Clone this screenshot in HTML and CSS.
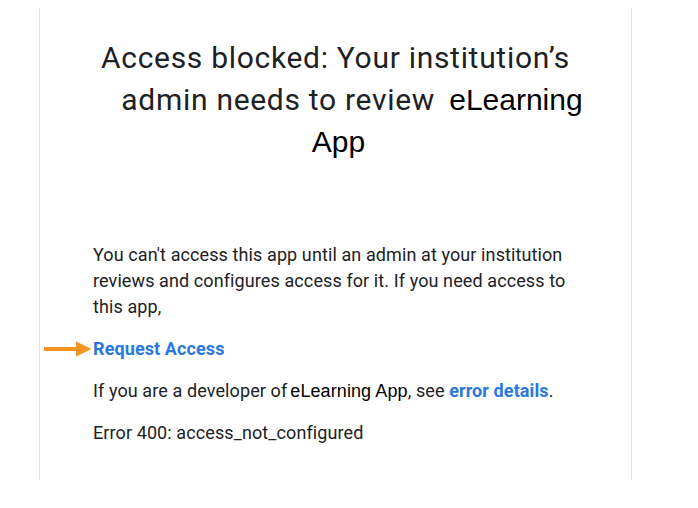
FILE: index.html
```html
<!DOCTYPE html>
<html lang="en">
<head>
<meta charset="utf-8">
<title>Access blocked</title>
<link rel="stylesheet" href="styles.css">
</head>
<body>
  <main class="card">
    <h1 class="title">
      <span class="title-line">Access blocked: Your institution’s</span>
      <span class="title-line title-line-shift">admin needs to review <span class="app-name app-gap">eLearning</span></span>
      <span class="title-line title-line-app"><span class="app-name">App</span></span>
    </h1>
    <p class="text">You can't access this app until an admin at your institution reviews and configures access for it. If you need access to this app,</p>
    <p class="text request">
      <svg class="arrow" width="48" height="16" viewBox="0 0 48 16" aria-hidden="true">
        <rect x="0" y="6" width="34" height="4" fill="#f7941d"/>
        <polygon points="32,0.5 47.5,8 32,15.5" fill="#f7941d"/>
      </svg>
      <a class="link strong" href="#">Request Access</a>
    </p>
    <p class="text">If you are a developer of<span class="app-inline">eLearning App</span>, see <a class="link strong" href="#">error details</a>.</p>
    <p class="text">Error 400: access_not_configured</p>
  </main>
</body>
</html>
```

FILE: styles.css
```css
html, body {
  margin: 0;
  padding: 0;
  background: #ffffff;
}

body {
  font-family: Roboto, "Liberation Sans", Arial, sans-serif;
  color: #202124;
}

.card {
  box-sizing: border-box;
  margin: 8px 0 0 39px;
  width: 593px;
  height: 472px;
  border-left: 1px solid #e3e3e3;
  border-right: 1px solid #e3e3e3;
  padding: 29px 45px 0 53px;
}

.title {
  margin: 0 -10px 0 -18px;
  font-family: Roboto, "Open Sans", sans-serif;
  font-size: 30px;
  line-height: 42px;
  font-weight: 400;
  text-align: center;
  color: #202124;
  letter-spacing: 0.7px;
}

.title-line {
  display: block;
}

.title-line-shift {
  padding-left: 33px;
}

.title-line-app {
  padding-left: 6px;
}

.app-name {
  font-family: "Liberation Sans", Arial, sans-serif;
  font-size: 30px;
  color: #000000;
  letter-spacing: 0;
}

.app-gap {
  padding-left: 6px;
}

.text {
  margin: 0 0 16px;
  font-size: 18px;
  line-height: 26px;
  letter-spacing: 0.1px;
  color: #202124;
}

.title + .text {
  margin-top: 79px;
}

.request {
  position: relative;
}

.arrow {
  position: absolute;
  left: -49px;
  top: 5px;
}

.link {
  color: #2a78dc;
  text-decoration: none;
}

.strong {
  font-weight: 700;
}

.app-inline {
  font-family: "Liberation Sans", Arial, sans-serif;
  color: #000000;
  padding-left: 3px;
}
```
